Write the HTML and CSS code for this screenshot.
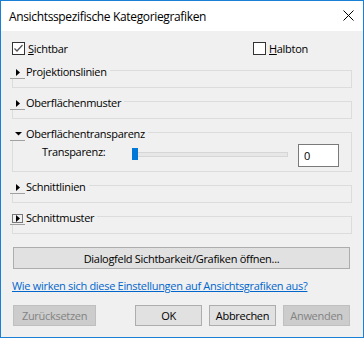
FILE: index.html
```html
<!DOCTYPE html>
<html lang="de">
<head>
    <meta charset="UTF-8">
    <title>Ansichtsspezifische Kategoriegrafiken</title>
    <link rel="stylesheet" href="styles.css">
</head>
<body>
    <div class="window">
        <div class="titlebar">
            <span class="title">Ansichtsspezifische Kategoriegrafiken</span>
            <svg class="close" width="11" height="11" viewBox="0 0 11 11">
                <path d="M0.5 0.5 L10.5 10.5 M10.5 0.5 L0.5 10.5" stroke="#000" stroke-width="1"/>
            </svg>
        </div>

        <div class="content">
            <div class="checks">
                <label class="check">
                    <span class="box">
                        <svg width="11" height="11" viewBox="0 0 11 11"><path d="M1.5 5.5 L4 8 L9.5 2" fill="none" stroke="#555" stroke-width="1.3"/></svg>
                    </span>
                    <span><u>S</u>ichtbar</span>
                </label>
                <label class="check">
                    <span class="box"></span>
                    <span><u>H</u>albton</span>
                </label>
            </div>

            <div class="group">
                <div class="group-head">
                    <span class="expander"><svg width="15" height="14" viewBox="0 0 15 14"><polygon points="6,5 10,8.5 6,12" fill="#000"/></svg></span>
                    <span class="group-title">Projektionslinien</span>
                </div>
                <div class="group-body"></div>
            </div>

            <div class="group">
                <div class="group-head">
                    <span class="expander"><svg width="15" height="14" viewBox="0 0 15 14"><polygon points="6,5 10,8.5 6,12" fill="#000"/></svg></span>
                    <span class="group-title">Oberflächenmuster</span>
                </div>
                <div class="group-body"></div>
            </div>

            <div class="group">
                <div class="group-head">
                    <span class="expander"><svg width="15" height="14" viewBox="0 0 15 14"><polygon points="5,6 12,6 8.5,9.5" fill="#000"/></svg></span>
                    <span class="group-title">Oberflächentransparenz</span>
                </div>
                <div class="group-body open">
                    <div class="slider-row">
                        <span class="slider-label">Transparenz:</span>
                        <div class="slider">
                            <div class="track"></div>
                            <div class="thumb"></div>
                        </div>
                        <div class="textbox">0</div>
                    </div>
                </div>
            </div>

            <div class="group">
                <div class="group-head">
                    <span class="expander"><svg width="15" height="14" viewBox="0 0 15 14"><polygon points="6,5 10,8.5 6,12" fill="#000"/></svg></span>
                    <span class="group-title">Schnittlinien</span>
                </div>
                <div class="group-body"></div>
            </div>

            <div class="group">
                <div class="group-head">
                    <span class="expander"><svg width="15" height="14" viewBox="0 0 15 14"><rect x="2.5" y="4.5" width="10" height="8" fill="none" stroke="#000" stroke-width="1" stroke-dasharray="1,1"/><polygon points="6,5 10,8.5 6,12" fill="#000"/></svg></span>
                    <span class="group-title">Schnittmuster</span>
                </div>
                <div class="group-body"></div>
            </div>

            <button class="btn wide">Dialogfeld Sichtbarkeit/Grafiken öffnen...</button>

            <a class="help-link" href="#">Wie wirken sich diese Einstellungen auf Ansichtsgrafiken aus?</a>

            <div class="actions">
                <button class="btn reset" disabled>Zurücksetzen</button>
                <button class="btn ok">OK</button>
                <button class="btn">Abbrechen</button>
                <button class="btn" disabled>Anwenden</button>
            </div>
        </div>
    </div>
</body>
</html>
```

FILE: styles.css
```css
body {
    margin: 0;
    font-family: "Open Sans", "Noto Sans", sans-serif;
    font-size: 11px;
    letter-spacing: -0.3px;
    color: #000;
}
.window {
    width: 364px;
    height: 338px;
    box-sizing: border-box;
    border: 1px solid #1a80d6;
    background-color: #f0f0f0;
}
.titlebar {
    height: 30px;
    background: white;
    display: flex;
    align-items: center;
    justify-content: space-between;
    padding: 0 9px 0 8px;
}
.title {
    font-size: 12px;
    letter-spacing: -0.35px;
}
.close {
    margin-bottom: 2px;
}
.content {
    padding: 0 13px 0 9px;
}
.checks {
    display: grid;
    grid-template-columns: 241px auto;
    margin: 11px 0 0 2px;
    height: 13px;
}
.check {
    display: flex;
    align-items: center;
    gap: 3px;
    line-height: 13px;
}
.box {
    width: 13px;
    height: 13px;
    box-sizing: border-box;
    border: 1px solid #333;
    background: white;
    display: flex;
    align-items: center;
    justify-content: center;
}
.box svg {
    display: block;
}
.group {
    margin-top: 7px;
}
.checks + .group {
    margin-top: 9px;
}
.group-head {
    position: relative;
    z-index: 1;
    display: flex;
    width: fit-content;
    height: 15px;
    align-items: center;
    background-color: #f0f0f0;
    padding-right: 3px;
}
.expander {
    width: 15px;
    height: 14px;
    border-bottom: 1px solid #a0a0a0;
    display: block;
}
.expander svg {
    display: block;
}
.group-title {
    margin-left: 1px;
    line-height: 15px;
}
.group-body {
    margin: -9px 0 0 2px;
    width: 340px;
    height: 18px;
    box-sizing: border-box;
    border: 1px solid #dcdcdc;
}
.group-body.open {
    height: 40px;
}
.slider-row {
    display: flex;
    align-items: flex-start;
    margin-top: 11px;
    padding-left: 29px;
}
.slider-label {
    width: 90px;
    line-height: 16px;
}
.slider {
    position: relative;
    width: 156px;
    height: 12px;
    margin-top: 4px;
}
.track {
    margin: 4px 0 0 4px;
    height: 3px;
    background-color: #e7e7e7;
    border: 1px solid #d6d6d6;
    border-left: none;
}
.thumb {
    position: absolute;
    left: 0;
    top: 0;
    width: 6px;
    height: 12px;
    background-color: #0078d7;
}
.textbox {
    margin-left: 10px;
    width: 41px;
    height: 23px;
    box-sizing: border-box;
    border: 1px solid #7a7a7a;
    background: white;
    padding-left: 5px;
    line-height: 21px;
}
.btn {
    font-family: inherit;
    font-size: 11px;
    letter-spacing: -0.3px;
    color: #000;
    background-color: #e1e1e1;
    border: 1px solid #adadad;
    height: 21px;
    width: 67px;
    padding: 0;
}
.btn:disabled {
    background-color: #cccccc;
    border-color: #bfbfbf;
    color: #838383;
}
.wide {
    display: block;
    margin: 13px 0 0 3px;
    width: 337px;
    height: 22px;
}
.help-link {
    display: block;
    margin: 9px 0 0 2px;
    line-height: 16px;
    color: #0066cc;
}
.actions {
    display: flex;
    gap: 7px;
    margin: 11px 0 0 3px;
    width: 337px;
}
.reset {
    width: 83px;
}
.ok {
    margin-left: auto;
}
```
